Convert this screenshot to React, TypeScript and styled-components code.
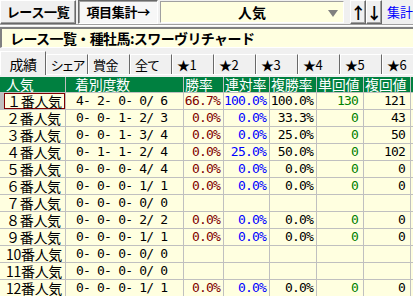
import React from 'react';
import styled, { createGlobalStyle } from 'styled-components';

const GlobalStyle = createGlobalStyle`
  html, body {
    margin: 0;
    padding: 0;
    background: #f0f0f0;
    overflow: hidden;
  }
  body {
    font-family: "Noto Sans CJK JP", "Noto Sans", sans-serif;
  }
`;

const Page = styled.div`
  width: 413px;
  height: 296px;
  overflow: hidden;
  display: flex;
  flex-direction: column;
`;

const Toolbar = styled.div`
  display: flex;
  align-items: stretch;
  height: 24px;
  border-bottom: 1px solid #a0a0a0;
  box-shadow: 0 1px 0 #ffffff;
`;

interface BevelProps { pressed?: boolean; width: number; }

const BevelButton = styled.div<BevelProps>`
  box-sizing: border-box;
  width: ${p => p.width}px;
  display: flex;
  align-items: center;
  justify-content: center;
  font-size: 13px;
  line-height: 16px;
  font-weight: 700;
  letter-spacing: -0.3px;
  color: #000;
  white-space: nowrap;
  background: ${p => (p.pressed ? '#f7f7f7' : '#f0f0f0')};
  border: 1px solid;
  border-color: ${p => (p.pressed ? '#696969 #ffffff #ffffff #696969' : '#ffffff #696969 #696969 #ffffff')};
  box-shadow: ${p => (p.pressed ? 'inset 1px 1px 0 #a0a0a0' : 'inset -1px -1px 0 #a0a0a0')};
  margin-right: 2px;
`;

const Combo = styled.div`
  box-sizing: border-box;
  width: 186px;
  margin: 1px 6px 1px 0;
  position: relative;
  display: flex;
  align-items: center;
  justify-content: center;
  background: #ffffe0;
  border: 1px solid;
  border-color: #a0a0a0 #ffffff #ffffff #a0a0a0;
  font-size: 14px;
  line-height: 16px;
  font-weight: 700;
`;

const ComboArrow = styled.span`
  position: absolute;
  right: 5px;
  top: 8px;
  width: 0;
  height: 0;
  border-left: 5px solid transparent;
  border-right: 5px solid transparent;
  border-top: 7px solid #808080;
`;

const ArrowButton = styled(BevelButton)`
  font-size: 16px;
  margin-right: 0;
`;

const LinkText = styled.div`
  display: flex;
  align-items: center;
  margin-left: 5px;
  font-size: 13px;
  line-height: 16px;
  color: #0000ff;
  white-space: nowrap;
`;

const TitleBox = styled.div`
  box-sizing: border-box;
  height: 22px;
  margin-top: 2px;
  display: flex;
  align-items: center;
  padding-left: 8px;
  background: #ffffe0;
  border-top: 2px solid #808080;
  border-left: 2px solid #808080;
  border-bottom: 1px solid #ffffff;
  font-size: 14px;
  line-height: 16px;
  font-weight: 700;
  letter-spacing: -0.6px;
  white-space: nowrap;
`;

const TabStrip = styled.div`
  display: flex;
  height: 24px;
  margin-top: 2px;
  align-items: flex-end;
  border-bottom: 1px solid #ffffff;
  white-space: nowrap;
`;

interface TabProps { active?: boolean; width: number; }

const Tab = styled.div<TabProps>`
  box-sizing: border-box;
  flex: none;
  width: ${p => p.width}px;
  height: ${p => (p.active ? 24 : 20)}px;
  margin-bottom: ${p => (p.active ? -1 : 0)}px;
  display: flex;
  align-items: center;
  justify-content: ${p => (p.active ? 'center' : 'flex-start')};
  padding-left: ${p => (p.active ? 0 : 4)}px;
  background: #f0f0f0;
  border-top: 1px solid #ffffff;
  border-left: 1px solid #ffffff;
  border-right: 1px solid #696969;
  font-size: ${p => (p.active ? 14 : 13)}px;
  line-height: 16px;
  font-feature-settings: "palt";
  letter-spacing: -0.4px;
  color: #000;
`;

const Grid = styled.div`
  margin-top: 2px;
  display: grid;
  grid-template-columns: 65px 117px 39px 45px 46px 46px 46px 1fr;
  grid-auto-rows: 16px;
  grid-template-rows: 15px;
  gap: 1px;
  background: #c0c0c0;
  flex: 1;
`;

const HeadCell = styled.div<{ indent?: number }>`
  background: #008040;
  color: #ffffff;
  font-size: 14px;
  line-height: 15px;
  letter-spacing: -0.3px;
  padding-left: ${p => p.indent ?? 1}px;
  white-space: nowrap;
`;

const LabelCell = styled.div<{ selected?: boolean }>`
  box-sizing: border-box;
  background: #ffffe0;
  font-size: 14px;
  line-height: ${p => (p.selected ? 14 : 16)}px;
  letter-spacing: -0.3px;
  padding-left: ${p => (p.selected ? 2 : 6)}px;
  margin-left: ${p => (p.selected ? 4 : 0)}px;
  border: ${p => (p.selected ? '1px solid #800000' : 'none')};
  white-space: nowrap;
`;

const DataCell = styled.div<{ color?: string; align?: string; pad?: number }>`
  background: #ffffe0;
  color: ${p => p.color ?? '#000'};
  font-family: "DejaVu Sans Mono", "Liberation Mono", monospace;
  font-size: 13px;
  letter-spacing: -0.8px;
  line-height: 16px;
  text-align: ${p => p.align ?? 'right'};
  padding: 0 ${p => (p.align === 'left' ? 0 : p.pad ?? 3)}px 0 ${p => (p.align === 'left' ? 10 : 0)}px;
  white-space: pre;
`;

type Row = [string, string, string?, string?, string?, string?, string?];

const rows: Row[] = [
  ['１番人気', '4- 2- 0- 0/ 6', '66.7%', '100.0%', '100.0%', '130', '121'],
  ['２番人気', '0- 0- 1- 2/ 3', '0.0%', '0.0%', '33.3%', '0', '43'],
  ['３番人気', '0- 0- 1- 3/ 4', '0.0%', '0.0%', '25.0%', '0', '50'],
  ['４番人気', '0- 1- 1- 2/ 4', '0.0%', '25.0%', '50.0%', '0', '102'],
  ['５番人気', '0- 0- 0- 4/ 4', '0.0%', '0.0%', '0.0%', '0', '0'],
  ['６番人気', '0- 0- 0- 1/ 1', '0.0%', '0.0%', '0.0%', '0', '0'],
  ['７番人気', '0- 0- 0- 0/ 0'],
  ['８番人気', '0- 0- 0- 2/ 2', '0.0%', '0.0%', '0.0%', '0', '0'],
  ['９番人気', '0- 0- 0- 1/ 1', '0.0%', '0.0%', '0.0%', '0', '0'],
  ['10番人気', '0- 0- 0- 0/ 0'],
  ['11番人気', '0- 0- 0- 0/ 0'],
  ['12番人気', '0- 0- 0- 1/ 1', '0.0%', '0.0%', '0.0%', '0', '0'],
];

const tabs = ['成績', 'シェア', '賞金', '全て', '★1', '★2', '★3', '★4', '★5', '★6'];

export default function App() {
  return (
    <Page>
      <GlobalStyle />
      <Toolbar>
        <BevelButton width={77}>レース一覧</BevelButton>
        <BevelButton width={81} pressed>項目集計→</BevelButton>
        <Combo>
          人気
          <ComboArrow />
        </Combo>
        <ArrowButton width={16}>↑</ArrowButton>
        <ArrowButton width={16}>↓</ArrowButton>
        <LinkText>集計</LinkText>
      </Toolbar>

      <TitleBox>レース一覧・種牡馬:スワーヴリチャード</TitleBox>

      <TabStrip>
        {tabs.map((t, i) => (
          <Tab key={t} active={i === 0} width={i === 0 ? 46 : 42}>
            {t}
          </Tab>
        ))}
      </TabStrip>

      <Grid>
        <HeadCell indent={6}>人気</HeadCell>
        <HeadCell indent={9}>着別度数</HeadCell>
        <HeadCell>勝率</HeadCell>
        <HeadCell>連対率</HeadCell>
        <HeadCell>複勝率</HeadCell>
        <HeadCell>単回値</HeadCell>
        <HeadCell>複回値</HeadCell>
        <HeadCell />
        {rows.map((r, i) => (
          <React.Fragment key={r[0]}>
            <LabelCell selected={i === 0}>{r[0]}</LabelCell>
            <DataCell align="left">{r[1]}</DataCell>
            <DataCell color="#800000">{r[2] ?? ''}</DataCell>
            <DataCell color="#0000ff">{r[3] ?? ''}</DataCell>
            <DataCell>{r[4] ?? ''}</DataCell>
            <DataCell color="#008000" pad={5}>{r[5] ?? ''}</DataCell>
            <DataCell pad={5}>{r[6] ?? ''}</DataCell>
            <DataCell />
          </React.Fragment>
        ))}
      </Grid>
    </Page>
  );
}
